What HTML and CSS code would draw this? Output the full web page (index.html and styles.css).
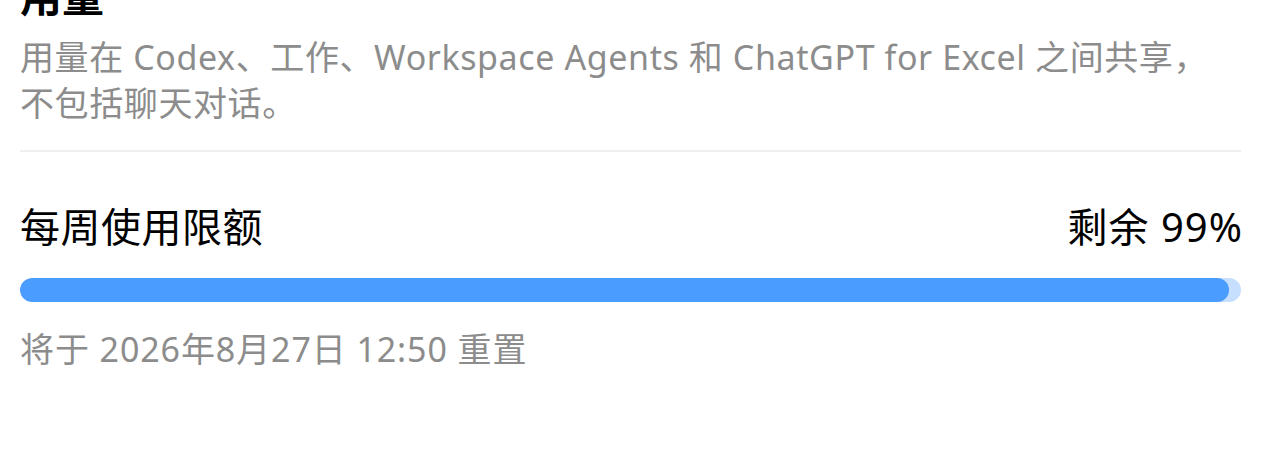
FILE: index.html
```html
<!DOCTYPE html>
<html lang="zh-CN">
<head>
<meta charset="utf-8">
<title>用量</title>
<link rel="stylesheet" href="styles.css">
</head>
<body>
<main class="page">
  <section class="intro">
    <h1 class="title">用量</h1>
    <p class="desc">用量在 Codex、工作、Workspace Agents 和 ChatGPT for Excel 之间共享，不包括聊天对话。</p>
  </section>
  <section class="limit">
    <div class="limit-head">
      <span class="limit-name">每周使用限额</span>
      <span class="limit-value">剩余 99%</span>
    </div>
    <div class="bar"><div class="bar-fill" style="width: 99%"></div></div>
    <p class="reset">将于 2026年8月27日 12:50 重置</p>
  </section>
</main>
</body>
</html>
```

FILE: styles.css
```css
html, body {
  margin: 0;
  padding: 0;
  background: #ffffff;
}

body {
  font-family: "Noto Sans", "Noto Sans CJK SC", sans-serif;
  color: #000000;
  overflow: hidden;
}

.page {
  width: 1221px;
  padding-left: 20px;
}

.intro {
  border-bottom: 2px solid #efefef;
  padding-bottom: 24px;
}

.title {
  margin: -28px 0 0 0;
  font-size: 42px;
  font-weight: 700;
  line-height: 48px;
}

.desc {
  margin: 14px 0 0 0;
  font-size: 34px;
  line-height: 46px;
  letter-spacing: 0.6px;
  color: #8c8c8c;
  width: 1200px;
}

.limit {
  padding-top: 51px;
}

.limit-head {
  display: flex;
  justify-content: space-between;
  align-items: baseline;
  font-size: 40px;
  line-height: 48px;
  letter-spacing: 0.5px;
}

.limit-value {
  letter-spacing: 1px;
  margin-right: -2px;
}

.bar {
  margin-top: 27px;
  height: 24px;
  border-radius: 12px;
  background: #c6dfff;
  overflow: hidden;
}

.bar-fill {
  height: 100%;
  border-radius: 12px;
  background: #4a9dff;
}

.reset {
  margin: 24px 0 0 0;
  font-size: 34px;
  line-height: 46px;
  letter-spacing: 0.9px;
  color: #8c8c8c;
}
```
